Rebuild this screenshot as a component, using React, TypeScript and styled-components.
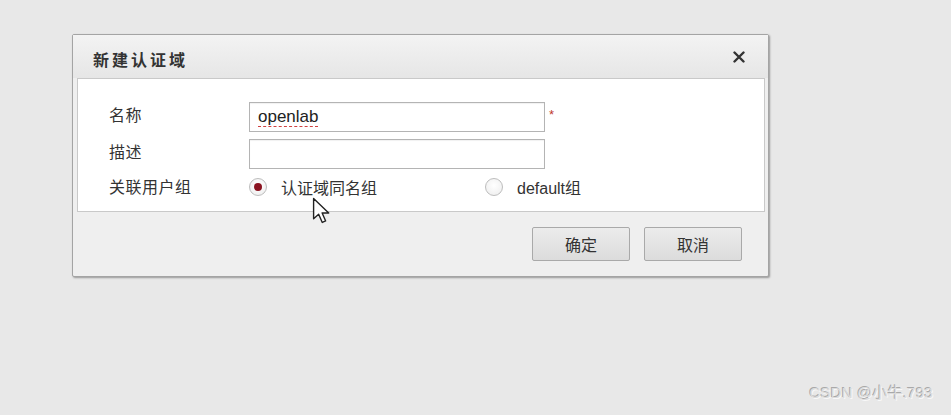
import React from "react";
import styled, { createGlobalStyle } from "styled-components";

const GlobalStyle = createGlobalStyle`
  html, body {
    margin: 0;
    padding: 0;
    background: #e8e8e8;
  }
  body {
    font-family: "Liberation Sans", "Noto Sans CJK SC", sans-serif;
  }
`;

const Page = styled.div`
  position: relative;
  width: 951px;
  height: 415px;
  box-sizing: border-box;
  padding: 34px 0 0 72px;
  background: #e8e8e8;
  overflow: hidden;
`;

const Dialog = styled.div`
  width: 697px;
  height: 243px;
  box-sizing: border-box;
  border: 1px solid #a4a4a4;
  border-radius: 2px;
  background: #efefef;
  box-shadow: 1px 1px 2px rgba(0, 0, 0, 0.35);
  display: flex;
  flex-direction: column;
`;

const Header = styled.div`
  height: 43px;
  box-sizing: border-box;
  padding: 4px 22px 0 20px;
  display: flex;
  align-items: center;
  justify-content: space-between;
  background: linear-gradient(#f3f3f3, #e6e6e6);
`;

const Title = styled.div`
  font-family: "Noto Sans CJK SC", sans-serif;
  font-weight: 700;
  font-size: 16px;
  letter-spacing: 3px;
  color: #333;
`;

const Close = styled.button`
  border: 0;
  padding: 0;
  margin-bottom: 3px;
  background: transparent;
  width: 14px;
  height: 14px;
  display: flex;
  align-items: center;
  justify-content: center;
  cursor: pointer;
`;

const Body = styled.div`
  margin: 0 3px 0 4px;
  height: 134px;
  box-sizing: border-box;
  border: 1px solid #c9c9c9;
  background: #ffffff;
  padding: 23px 0 14px 31px;
  display: grid;
  grid-template-columns: 140px 1fr;
  grid-template-rows: 30px 30px 22px;
  row-gap: 7px;
  align-content: start;
  & > :nth-child(n + 5) {
    margin-top: -1px;
  }
`;

const Label = styled.div<{ $center?: boolean }>`
  font-family: "Noto Sans CJK SC", sans-serif;
  font-size: 16px;
  line-height: 22px;
  padding-top: ${(p) => (p.$center ? "0" : "1px")};
  color: #333;
  letter-spacing: 0.5px;
`;

const FieldRow = styled.div`
  display: flex;
  align-items: flex-start;
  gap: 4px;
`;

const InputBox = styled.div`
  width: 296px;
  height: 30px;
  box-sizing: border-box;
  border: 1px solid #b4b4b4;
  box-shadow: inset 0 1px 1px rgba(0, 0, 0, 0.06);
  background: #fff;
  padding: 0 8px;
  display: flex;
  align-items: center;
`;

const Value = styled.span`
  font-family: "Liberation Sans", sans-serif;
  font-size: 17px;
  color: #222;
  text-decoration: underline dashed #d04040;
  text-decoration-thickness: 1px;
  text-underline-offset: 4px;
`;

const Required = styled.span`
  color: #c0392b;
  font-size: 13px;
  line-height: 16px;
  padding-top: 5px;
`;

const RadioGroup = styled.div`
  display: grid;
  grid-template-columns: 236px auto;
  align-items: center;
`;

const RadioOption = styled.label`
  display: flex;
  align-items: center;
  gap: 14px;
  font-size: 16px;
  color: #333;
  font-family: "Liberation Sans", "Noto Sans CJK SC", sans-serif;
  height: 22px;
`;

const RadioCircle = styled.span<{ $checked?: boolean }>`
  width: 18px;
  height: 18px;
  box-sizing: border-box;
  border-radius: 50%;
  border: 1px solid #bdbdbd;
  background: radial-gradient(circle at 50% 40%, #ffffff, #ececec);
  display: flex;
  align-items: center;
  justify-content: center;
  flex-shrink: 0;
  &::after {
    content: "";
    display: ${(p) => (p.$checked ? "block" : "none")};
    width: 8px;
    height: 8px;
    border-radius: 50%;
    background: #8a1320;
  }
`;

const Footer = styled.div`
  flex: 1;
  display: flex;
  justify-content: flex-end;
  align-items: flex-start;
  gap: 14px;
  padding: 15px 26px 0 0;
`;

const Button = styled.button`
  width: 98px;
  height: 34px;
  box-sizing: border-box;
  border: 1px solid #a9a9a9;
  border-radius: 2px;
  background: linear-gradient(#ececec, #dcdcdc);
  font-family: "Noto Sans CJK SC", sans-serif;
  font-size: 16px;
  color: #333;
  cursor: pointer;
  padding: 0;
`;

const Cursor = styled.svg`
  position: absolute;
  left: 312px;
  top: 197px;
`;

const Watermark = styled.div`
  position: absolute;
  right: 18px;
  bottom: 13px;
  font-family: "Liberation Sans", "Noto Sans CJK SC", sans-serif;
  font-size: 15px;
  color: #dcdcdc;
  text-shadow: -1px -1px 0 #a9a9a9, 1px 1px 0 #f8f8f8;
  letter-spacing: 0.2px;
`;

export default function App() {
  return (
    <>
      <GlobalStyle />
      <Page>
        <Dialog>
          <Header>
            <Title>新建认证域</Title>
            <Close aria-label="close">
              <svg width="12" height="12" viewBox="0 0 12 12">
                <path d="M1.5 1.5 L10.5 10.5 M10.5 1.5 L1.5 10.5" stroke="#333" strokeWidth="2.4" strokeLinecap="round" />
              </svg>
            </Close>
          </Header>
          <Body>
            <Label>名称</Label>
            <FieldRow>
              <InputBox>
                <Value>openlab</Value>
              </InputBox>
              <Required>*</Required>
            </FieldRow>
            <Label>描述</Label>
            <FieldRow>
              <InputBox />
            </FieldRow>
            <Label $center>关联用户组</Label>
            <RadioGroup>
              <RadioOption>
                <RadioCircle $checked />
                认证域同名组
              </RadioOption>
              <RadioOption>
                <RadioCircle />
                default组
              </RadioOption>
            </RadioGroup>
          </Body>
          <Footer>
            <Button>确定</Button>
            <Button>取消</Button>
          </Footer>
        </Dialog>
        <Cursor width="20" height="28" viewBox="0 0 14 20">
          <path d="M1 1 L1 15.5 L4.6 12.3 L7.2 18.2 L9.6 17.1 L7.1 11.4 L11.8 11.4 Z" fill="#fff" stroke="#222" strokeWidth="1" strokeLinejoin="round" />
        </Cursor>
        <Watermark>CSDN @小牛.793</Watermark>
      </Page>
    </>
  );
}
